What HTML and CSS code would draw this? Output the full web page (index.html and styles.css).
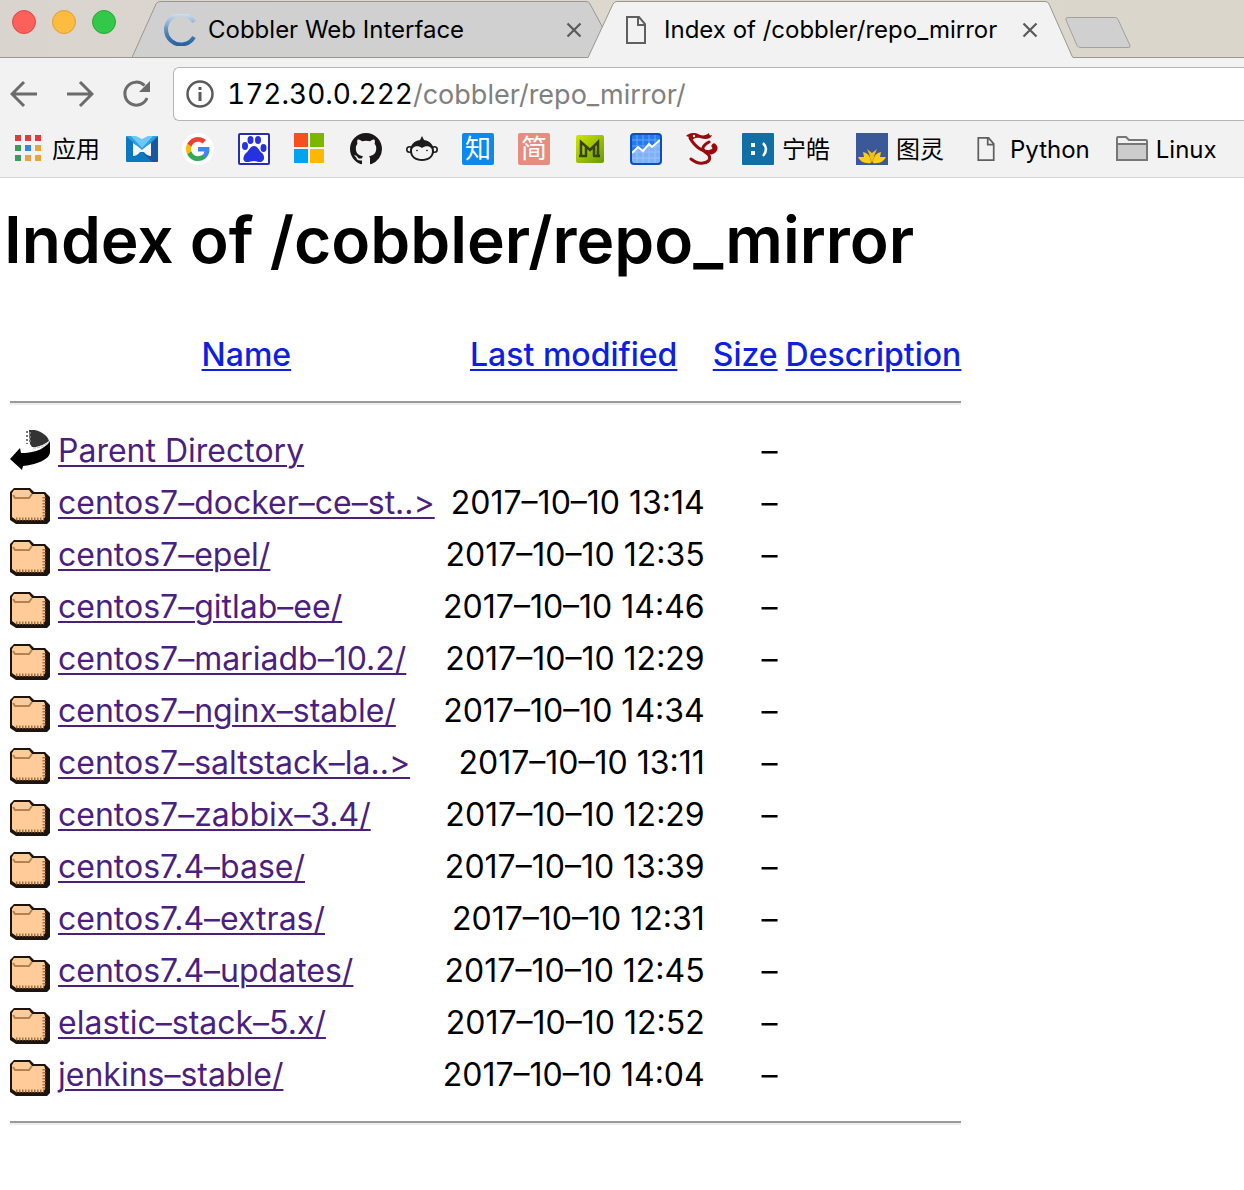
FILE: index.html
```html
<!DOCTYPE html>
<html lang="zh-CN">
<head>
<meta charset="utf-8">
<title>Index of /cobbler/repo_mirror</title>
<link rel="stylesheet" href="styles.css">
</head>
<body>
<svg width="0" height="0" class="sprite" aria-hidden="true">
  <symbol id="folder" viewBox="0 0 40 44">
    <path d="M0 11l4-4h16l4 4h11l5 5v24l-3 3H6l-6-4z" fill="#1c150f"/>
    <path d="M2 12l2-3h15l3 4h12l1 2v21l-2 3H6l-4-3z" fill="#ffcc99"/>
    <path d="M3 14l2 3h14l3-4" fill="none" stroke="#b3824f" stroke-width="2"/>
    <path d="M34 16v21M6 38h28" fill="none" stroke="#a5713f" stroke-width="3" stroke-dasharray="1.500 1.500"/>
  </symbol>
  <symbol id="close" viewBox="0 0 16 16"><path d="M1.500 1.500l13 13M14.500 1.500l-13 13" stroke="#5a5a5a" stroke-width="2.200"/></symbol>
  <symbol id="page" viewBox="0 0 20 28"><path d="M1 1h12l6 7v19H1zM12 1v8h7" fill="none" stroke="#5f5f5f" stroke-width="2"/></symbol>
</svg>

<header class="browser">
  <div class="tabstrip">
    <div class="lights">
      <button class="light red" aria-label="Close"></button>
      <button class="light yellow" aria-label="Minimize"></button>
      <button class="light green" aria-label="Zoom"></button>
    </div>
    <div class="tab">
      <svg class="shape" viewBox="0 0 472 57" preserveAspectRatio="none"><path d="M0 57.500L24 4q1.500-2.500 4-2.500h426q3 0 4 2.500l14 26v27.500z" fill="#d0d0d0" stroke="#999790"/></svg>
      <svg class="tab-icon" viewBox="0 0 32 32"><defs><linearGradient id="ring" x1="0" y1="0" x2="0" y2="1"><stop offset="0" stop-color="#cddcee"/><stop offset=".6" stop-color="#4f83b9"/><stop offset="1" stop-color="#2a62a0"/></linearGradient></defs><path d="M30 8A15 15 0 1 0 30 23" fill="none" stroke="url(#ring)" stroke-width="4"/></svg>
      <span class="tab-title">Cobbler Web Interface</span>
      <button class="close" aria-label="Close tab"><svg width="16" height="16"><use href="#close"/></svg></button>
    </div>
    <div class="tab active">
      <svg class="shape" viewBox="0 0 485 58" preserveAspectRatio="none"><path d="M0 58L25 4q1.500-2.500 4-2.500h428q3 0 4 2.500l23 52 1 2z" fill="#f2f2f2"/><path d="M0 57.500L25 4q1.500-2.500 4-2.500h428q3 0 4 2.500l23 52 1 1.500" fill="none" stroke="#999790"/></svg>
      <svg class="tab-icon" viewBox="0 0 32 32"><use href="#page" x="6" y="2" width="20" height="28"/></svg>
      <span class="tab-title">Index of /cobbler/repo_mirror</span>
      <button class="close" aria-label="Close tab"><svg width="16" height="16"><use href="#close"/></svg></button>
    </div>
    <button class="new-tab" aria-label="New tab"><svg width="66" height="32" viewBox="0 0 66 32"><path d="M3 .5h47q2 0 3 2l12 26q1 2-2 2H16q-3 0-4-2L1 3Q0 .5 3 .5z" fill="#d0d0d0" stroke="#a3a19b"/></svg></button>
  </div>

  <div class="toolbar">
    <button aria-label="Back"><svg width="28" height="28" viewBox="0 0 28 28"><path d="M27 14H3M14 2L2 14l12 12" fill="none" stroke="#6b6b6b" stroke-width="3"/></svg></button>
    <button aria-label="Forward"><svg width="28" height="28" viewBox="0 0 28 28"><path d="M1 14h24M14 2l12 12-12 12" fill="none" stroke="#6b6b6b" stroke-width="3"/></svg></button>
    <button aria-label="Reload"><svg width="28" height="28" viewBox="0 0 28 28"><path d="M22.500 5.500A11.500 11.500 0 1 0 25 18" fill="none" stroke="#6b6b6b" stroke-width="3"/><path d="M28 1v11H17z" fill="#6b6b6b"/></svg></button>
    <div class="omnibox">
      <svg width="28" height="28" viewBox="0 0 28 28"><circle cx="14" cy="14" r="12.500" fill="none" stroke="#5a5a5a" stroke-width="2.500"/><path d="M12.500 7h3v3h-3zM12.500 12h3v9h-3z" fill="#5a5a5a"/></svg>
      <label for="url">172.30.0.222</label>
      <input id="url" type="text" value="/cobbler/repo_mirror/">
    </div>
  </div>

  <nav class="bookmarks">
    <a href="#"><svg viewBox="0 0 32 32"><path d="M3 2h6v6H3zM13 2h6v6h-6zM23 2h6v6h-6z" fill="#dc3d3d"/><path d="M3 12h6v6H3zM3 22h6v6H3z" fill="#3c9a5a"/><path d="M13 12h6v6h-6z" fill="#3983e8"/><path d="M23 12h6v6h-6zM13 22h6v6h-6zM23 22h6v6h-6z" fill="#e8a33a"/></svg><span>应用</span></a>
    <a href="#" aria-label="Mail"><svg viewBox="0 0 32 32"><rect y="3" width="32" height="26" rx="1" fill="#0c78c0"/><path d="M19 22l7-12 6-7v25l-1 1h-5z" fill="#1b559d"/><path d="M7 10v13q4 0 7-4h4q3 4 7 4V10l-9 6z" fill="#f4f8fc"/><path d="M0 3h32L16 17z" fill="#2f9fe0"/><path d="M5 3h22l-11 12z" fill="#6cc8f4"/><path d="M10 3h12l-6 3z" fill="#f2f2f2"/></svg></a>
    <a href="#" aria-label="Google"><svg viewBox="0 0 32 32"><circle cx="16" cy="16" r="16" fill="#fff"/><g transform="translate(4 4)"><path d="M23.500 12.300c0-.8-.1-1.600-.2-2.300H12v4.500h6.500a5.500 5.500 0 0 1-2.400 3.600v3h3.900c2.200-2.100 3.500-5.200 3.500-8.800z" fill="#4285f4"/><path d="M12 24c3.200 0 6-1.100 8-2.900l-3.900-3c-1.100.7-2.500 1.200-4.100 1.200-3.100 0-5.800-2.100-6.700-5H1.300v3.100A12 12 0 0 0 12 24z" fill="#34a853"/><path d="M5.300 14.300a7.200 7.200 0 0 1 0-4.600V6.600h-4a12 12 0 0 0 0 10.800z" fill="#fbbc05"/><path d="M12 4.700c1.800 0 3.400.6 4.600 1.800L20 3.100A12 12 0 0 0 1.300 6.600l4 3.100c.9-2.900 3.600-5 6.700-5z" fill="#ea4335"/></g></svg></a>
    <a href="#" aria-label="Baidu"><svg viewBox="0 0 32 32"><rect x="1" y="1" width="30" height="30" rx="1" fill="#fff" stroke="#2b2bb5" stroke-width="2"/><g fill="#2732df"><ellipse cx="12.500" cy="7" rx="3" ry="4"/><ellipse cx="20" cy="7" rx="3" ry="4"/><ellipse cx="7" cy="13" rx="3" ry="4"/><ellipse cx="25.500" cy="15" rx="3" ry="4"/><path d="M16 13c4 0 5 5 8 7 3 3 3 8-1 9-3 .5-4-1-7-1s-5 1.500-8 1c-4-1-3-6 0-9 3-2 4-7 8-7z"/></g></svg></a>
    <a href="#" aria-label="Microsoft"><svg viewBox="0 0 32 32"><path d="M0 0h14v14H0z" fill="#f4511e"/><path d="M16 0h14v14H16z" fill="#7cb700"/><path d="M0 16h14v14H0z" fill="#00a3ee"/><path d="M16 16h14v14H16z" fill="#ffb800"/></svg></a>
    <a href="#" aria-label="GitHub"><svg viewBox="0 0 16 16"><path fill="#191717" d="M8 0C3.580 0 0 3.580 0 8c0 3.540 2.290 6.530 5.470 7.590.4.070.55-.17.55-.38 0-.19-.01-.82-.01-1.490-2.010.37-2.530-.49-2.690-.94-.09-.23-.48-.94-.82-1.130-.28-.15-.68-.52-.01-.53.63-.01 1.080.58 1.230.82.72 1.210 1.870.87 2.330.66.070-.52.28-.87.51-1.070-1.780-.2-3.640-.89-3.640-3.950 0-.87.31-1.590.82-2.150-.08-.2-.36-1.020.08-2.120 0 0 .67-.21 2.200.82.64-.18 1.320-.27 2-.27s1.360.09 2 .27c1.530-1.040 2.200-.82 2.200-.82.44 1.100.16 1.920.08 2.120.51.56.82 1.270.82 2.150 0 3.070-1.870 3.750-3.650 3.950.29.25.54.73.54 1.480 0 1.070-.01 1.930-.01 2.200 0 .21.15.46.55.38A8.010 8.010 0 0 0 16 8c0-4.420-3.580-8-8-8z"/></svg></a>
    <a href="#" aria-label="OSChina"><svg viewBox="0 0 32 32"><circle cx="3.500" cy="16.500" r="2.700" fill="#f2f2f2" stroke="#1c1c1c" stroke-width="1.600"/><circle cx="28.500" cy="16.500" r="2.700" fill="#f2f2f2" stroke="#1c1c1c" stroke-width="1.600"/><path d="M16 3l2 4c6 1 10 5 10 11 0 6-5 10-12 10S4 24 4 18C4 12 8 8 14 7z" fill="#1c1c1c"/><path d="M16 15c4-3 10-2 10 3 0 6-5 8-10 8S6 24 6 18c0-5 6-6 10-3z" fill="#f2f2f2"/><circle cx="11" cy="17.500" r=".8"/><circle cx="21" cy="17.500" r=".8"/></svg></a>
    <a href="#" class="glyph zhi">知</a>
    <a href="#" class="glyph jian">简</a>
    <a href="#" aria-label="Mark"><svg viewBox="0 0 32 32"><defs><linearGradient id="lime" x1="0" y1="0" x2="1" y2="1"><stop offset="0" stop-color="#d3e600"/><stop offset="1" stop-color="#66990c"/></linearGradient></defs><rect x="2" y="2" width="28" height="28" rx="2" fill="url(#lime)"/><path d="M7 23V9l9 8 8-8v14M12 14v9M20 14v9M5 23h8M19 23h7" fill="none" stroke="#35430c" stroke-width="2.500"/></svg></a>
    <a href="#" aria-label="Chart"><svg viewBox="0 0 32 32"><defs><linearGradient id="blue" x1="0" y1="0" x2="0" y2="1"><stop offset="0" stop-color="#227bef"/><stop offset="1" stop-color="#2b75e4"/></linearGradient></defs><rect x="1" y="1" width="30" height="30" rx="3" fill="url(#blue)"/><path d="M7 2v28M13 2v28M19 2v28M25 2v28M2 7h28M2 13h28M2 19h28M2 25h28" stroke="#64a5fa" stroke-width="1"/><path d="M2 20l6-6 5 4 6-7 3 3 8-7v23H2z" fill="#bcd7ff" fill-opacity=".6"/><path d="M2 20l6-6 5 4 6-7 3 3 8-7" fill="none" stroke="#fff" stroke-width="2"/><rect x="1" y="1" width="30" height="30" rx="3" fill="none" stroke="#0d4fb5" stroke-width="2"/></svg></a>
    <a href="#" aria-label="Phoenix"><svg viewBox="0 0 32 32"><g fill="none" stroke="#980a0d" stroke-linecap="round"><path d="M4 5c5 9 12 14 22 14" stroke-width="3"/><path d="M25 19c4-1 5-4 3-6" stroke-width="5"/><path d="M23 9c-6 3-8 7-4 10 7 4 6 10-2 11-4 1-8-1-12-4" stroke-width="3"/></g><path d="M0 3C3 0 8-1 12 1c3 2 8 2 11-1 0 2 1 3 3 2-1 4-6 5-12 3-4-1-6 0-9 3L3 4z" fill="#980a0d"/><circle cx="8" cy="3" r="1.200" fill="#f2f2f2"/></svg></a>
    <a href="#"><svg viewBox="0 0 32 32"><rect width="32" height="32" rx="1" fill="#126fa5"/><path d="M9 10h4v4H9zM9 18h4v4H9z" fill="#fff"/><path d="M21 10q6 6 0 13" fill="none" stroke="#fff" stroke-width="2.500"/></svg><span>宁皓</span></a>
    <a href="#"><svg viewBox="0 0 32 32"><path d="M0 0h32v32H0z" fill="#3b5998"/><path d="M16 30c-2-4-2-8-5-14l5 4 5-4c-3 6-3 10-5 14z" fill="#f3bd13"/><path d="M15 30C8 31 4 28 2 24h6l-1-5c5 1 8 5 8 11zM17 30c7 1 11-2 13-6h-6l1-5c-5 1-8 5-8 11z" fill="#fdcd13"/></svg><span>图灵</span></a>
    <a href="#"><svg viewBox="0 0 32 32"><use href="#page" x="7" y="4" width="18" height="24"/></svg><span>Python</span></a>
    <a href="#"><svg viewBox="0 0 32 32"><path d="M1 27V5q0-1 1-1h8l3 3h17q1 0 1 1v19z" fill="#f2f2f2" stroke="#777" stroke-width="2"/><path d="M1 11h30v16H1z" fill="#ccc" stroke="#777" stroke-width="2"/></svg><span>Linux</span></a>
  </nav>
</header>

<main>
  <h1>Index of /cobbler/repo_mirror</h1>
  <table>
    <thead>
      <tr><th></th><th class="name"><a href="#">Name</a></th><th class="date"><a href="#">Last modified</a></th><th><a href="#">Size</a></th><th><a href="#">Description</a></th></tr>
      <tr><th colspan="5"><hr></th></tr>
    </thead>
    <tbody>
      <tr><td><svg class="icon" viewBox="0 0 40 44"><path d="M19 1h6c7 2 13 6 14 11-4 3-8 5-13 6h-4l-2-3z" fill="#333"/><path d="M17 2v13M20 3v12" stroke="#777" stroke-width="2" stroke-dasharray="2 2"/><path d="M0 30l10-11 1 5c11 0 22-2 29-12v11c0 8-16 13-27 14l-1 4z"/><path d="M23 19c6 0 12-2 16-6" fill="none" stroke="#ccc" stroke-width="1.500" stroke-dasharray="3 1"/></svg></td><td><a href="#">Parent Directory</a></td><td></td><td>–</td><td></td></tr>
      <tr><td><svg class="icon"><use href="#folder"/></svg></td><td><a href="#">centos7–docker–ce–st..&gt;</a></td><td>2017–10–10 13:14</td><td>–</td><td></td></tr>
      <tr><td><svg class="icon"><use href="#folder"/></svg></td><td><a href="#">centos7–epel/</a></td><td>2017–10–10 12:35</td><td>–</td><td></td></tr>
      <tr><td><svg class="icon"><use href="#folder"/></svg></td><td><a href="#">centos7–gitlab–ee/</a></td><td>2017–10–10 14:46</td><td>–</td><td></td></tr>
      <tr><td><svg class="icon"><use href="#folder"/></svg></td><td><a href="#">centos7–mariadb–10.2/</a></td><td>2017–10–10 12:29</td><td>–</td><td></td></tr>
      <tr><td><svg class="icon"><use href="#folder"/></svg></td><td><a href="#">centos7–nginx–stable/</a></td><td>2017–10–10 14:34</td><td>–</td><td></td></tr>
      <tr><td><svg class="icon"><use href="#folder"/></svg></td><td><a href="#">centos7–saltstack–la..&gt;</a></td><td>2017–10–10 13:11</td><td>–</td><td></td></tr>
      <tr><td><svg class="icon"><use href="#folder"/></svg></td><td><a href="#">centos7–zabbix–3.4/</a></td><td>2017–10–10 12:29</td><td>–</td><td></td></tr>
      <tr><td><svg class="icon"><use href="#folder"/></svg></td><td><a href="#">centos7.4–base/</a></td><td>2017–10–10 13:39</td><td>–</td><td></td></tr>
      <tr><td><svg class="icon"><use href="#folder"/></svg></td><td><a href="#">centos7.4–extras/</a></td><td>2017–10–10 12:31</td><td>–</td><td></td></tr>
      <tr><td><svg class="icon"><use href="#folder"/></svg></td><td><a href="#">centos7.4–updates/</a></td><td>2017–10–10 12:45</td><td>–</td><td></td></tr>
      <tr><td><svg class="icon"><use href="#folder"/></svg></td><td><a href="#">elastic–stack–5.x/</a></td><td>2017–10–10 12:52</td><td>–</td><td></td></tr>
      <tr><td><svg class="icon"><use href="#folder"/></svg></td><td><a href="#">jenkins–stable/</a></td><td>2017–10–10 14:04</td><td>–</td><td></td></tr>
    </tbody>
    <tfoot>
      <tr><th colspan="5"><hr></th></tr>
    </tfoot>
  </table>
</main>
</body>
</html>
```
FILE: styles.css
```css
* { box-sizing: border-box; }
body {
  margin: 0;
  background: #fff;
  color: #000;
  font-family: Inter, "Noto Sans CJK SC", sans-serif;
}
svg { display: block; flex: none; }
.sprite { position: absolute; }
button { border: 0; padding: 0; background: none; }

.browser { background: #f2f2f2; border-bottom: 1px solid #d4d4d4; overflow: hidden; }

.tabstrip {
  display: flex;
  height: 58px;
  background: linear-gradient(90deg, #dad4ce, #dcd8ce 50%, #dad6cc);
  border-bottom: 1px solid #999790;
}
.lights { display: flex; gap: 16px; padding: 10px 16px 0 12px; }
.light { width: 24px; height: 24px; border-radius: 50%; border: 1px solid; }
.red { background: #fc605b; border-color: #df4744; }
.yellow { background: #fdbc40; border-color: #de9f34; }
.green { background: #34c84a; border-color: #27a935; }

.tab {
  position: relative;
  display: flex;
  align-items: center;
  width: 456px;
  height: 58px;
  padding: 2px 0 0 32px;
  font-size: 24px;
}
.tab.active { width: 482px; }
.shape { position: absolute; left: 0; top: 0; width: 472px; height: 57px; }
.active .shape { width: 485px; height: 58px; }
.tab-icon { position: relative; width: 32px; height: 32px; }
.tab-title { position: relative; flex: 1; min-width: 0; margin-left: 12px; padding-bottom: 2px; white-space: nowrap; }
.close { position: relative; margin-right: 6px; }
.active .close { margin-right: 32px; }
.new-tab { align-self: flex-start; padding-top: 17px; margin-left: -5px; }

.toolbar { display: flex; align-items: center; gap: 28px; padding: 9px 0 0 10px; }
.omnibox {
  flex: 1;
  display: flex;
  align-items: center;
  height: 54px;
  margin-left: -5px;
  padding-left: 12px;
  background: #fff;
  border: 1px solid #b5b5b5;
  border-right: 0;
  border-radius: 6px 0 0 6px;
  font-size: 27px;
}
.omnibox label { margin-left: 13px; font-size: 28px; font-variant-numeric: tabular-nums; }
.omnibox input {
  flex: 1;
  min-width: 0;
  border: 0;
  padding: 0;
  outline: 0;
  background: none;
  color: #808080;
  font: inherit;
}

.bookmarks { display: flex; gap: 24px; align-items: center; height: 56px; padding-left: 12px; font-size: 24px; }
.bookmarks a { display: flex; align-items: center; gap: 8px; flex: none; color: #000; text-decoration: none; }
.bookmarks svg { width: 32px; height: 32px; }
.bookmarks span { padding: 2px 2px 0 0; line-height: 30px; }
.bookmarks .glyph { width: 32px; height: 32px; justify-content: center; border-radius: 2px; color: #fff; font-size: 26px; line-height: 32px; }
.zhi { background: #0f88eb; }
.jian { background: #e78d7f; }

main { padding: 18px 4px 60px; }
h1 { margin: 0 0 43px; font-size: 64px; line-height: 88px; font-weight: 600; }
table { border-spacing: 4px; font-size: 32px; line-height: 44px; }
th, td { padding: 2px; white-space: nowrap; }
th { font-weight: 500; }
th a { color: #0d1fe0; }
td a { color: #4b1f80; }
a { text-decoration-thickness: 2px; text-underline-offset: 3px; }
td:nth-child(n+3) { text-align: right; }
.name { min-width: 380px; }
.date { min-width: 266px; }
.icon { width: 40px; height: 44px; }
hr { margin: 16px 0; border: 0; border-top: 2px solid #9a9a9a; border-bottom: 2px solid #eee; }
```
